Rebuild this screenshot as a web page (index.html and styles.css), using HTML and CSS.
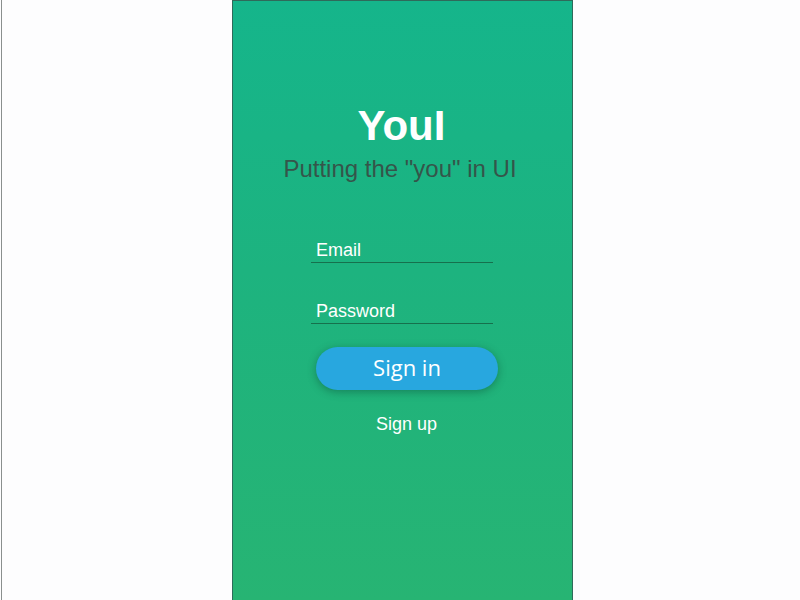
FILE: index.html
```html
<!DOCTYPE html>
<html>
<head>
<meta charset="utf-8">
<title>YouI</title>
<link rel="stylesheet" href="styles.css">
</head>
<body>
<div class="stage">
  <main class="phone">
    <h1 class="title">YouI</h1>
    <p class="tagline">Putting the "you" in UI</p>
    <form class="login">
      <input class="field" type="email" placeholder="Email">
      <input class="field field-pass" type="password" placeholder="Password">
      <button class="signin" type="button">Sign in</button>
      <a class="signup" href="#">Sign up</a>
    </form>
  </main>
</div>
</body>
</html>
```
FILE: styles.css
```css
html {
  background: #fdfdfe;
}
body {
  margin: 0 0 0 1px;
  border-left: 1px solid #8a8f8e;
  height: 600px;
  overflow: hidden;
  font-family: "Liberation Sans", Arial, sans-serif;
}
.stage {
  padding-left: 230px;
}
.phone {
  box-sizing: border-box;
  width: 341px;
  height: 600px;
  border: 1px solid #2f6a5a;
  border-bottom: none;
  background: linear-gradient(180deg, #15b58b 0%, #1db37f 45%, #27b473 100%);
  display: flex;
  flex-direction: column;
  align-items: center;
}
.title {
  margin: 102px 0 0 -2px;
  font-size: 42px;
  line-height: 46px;
  font-weight: bold;
  color: #ffffff;
}
.tagline {
  margin: 7px 0 0 -5px;
  font-size: 24px;
  line-height: 26px;
  color: #35554a;
}
.login {
  align-self: flex-start;
  margin: 56px 0 0 78px;
  width: 188px;
  display: flex;
  flex-direction: column;
  align-items: flex-start;
}
.field {
  box-sizing: border-box;
  width: 182px;
  height: 25px;
  padding: 0 5px;
  border: none;
  border-bottom: 1px solid rgba(20, 90, 60, 0.75);
  background: transparent;
  font-family: "Liberation Sans", Arial, sans-serif;
  font-size: 18px;
  color: #ffffff;
  outline: none;
}
.field::placeholder {
  color: #ffffff;
  opacity: 1;
}
.field-pass {
  margin-top: 36px;
}
.signin {
  margin: 23px 0 0 5px;
  width: 182px;
  height: 43px;
  padding: 0 0 3px 0;
  border: none;
  border-radius: 22px;
  background: #28a7df;
  color: #ffffff;
  font-family: "Open Sans", sans-serif;
  font-size: 22px;
  box-shadow: 0 2px 8px rgba(10, 70, 50, 0.45);
  cursor: pointer;
}
.signup {
  align-self: center;
  margin: 24px 0 0 3px;
  font-size: 18px;
  line-height: 21px;
  color: #ffffff;
  text-decoration: none;
}
```
